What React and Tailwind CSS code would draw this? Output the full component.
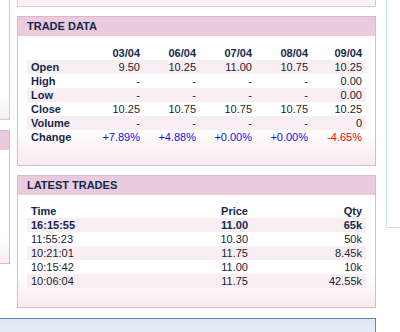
import React from "react";

// Trade data widget: OHLC summary by day plus the latest trades list.
const days = ["03/04", "06/04", "07/04", "08/04", "09/04"];

const rows = [
  { label: "Open", values: ["9.50", "10.25", "11.00", "10.75", "10.25"] },
  { label: "High", values: ["-", "-", "-", "-", "0.00"] },
  { label: "Low", values: ["-", "-", "-", "-", "0.00"] },
  { label: "Close", values: ["10.25", "10.75", "10.75", "10.75", "10.25"] },
  { label: "Volume", values: ["-", "-", "-", "-", "0"] },
  { label: "Change", values: ["+7.89%", "+4.88%", "+0.00%", "+0.00%", "-4.65%"], change: true },
];

const trades = [
  ["16:15:55", "11.00", "65k"],
  ["11:55:23", "10.30", "50k"],
  ["10:21:01", "11.75", "8.45k"],
  ["10:15:42", "11.00", "10k"],
  ["10:06:04", "11.75", "42.55k"],
];

const Panel = ({ title, children, className = "" }) => (
  <div className={`border border-[#dcb6cc] bg-gradient-to-b from-white from-75% to-[#f8ebf2] ${className}`}>
    <div className="h-[19px] bg-[#e9cbdd] pl-[9px] text-[11px] font-bold leading-[19px] text-[#13294b]">
      {title}
    </div>
    {children}
  </div>
);

export default function App() {
  return (
    <div
      className="h-[332px] w-[400px] overflow-hidden bg-white text-[11px] text-[#1c1c2c]"
      style={{ fontFamily: '"Liberation Sans", Arial, sans-serif' }}
    >
      <div className="flex items-start">
        {/* left column (cut off) */}
        <div className="flex w-[10px] flex-col gap-[10px]">
          <div className="h-[120px] border-r border-b border-[#e2c4d6] bg-gradient-to-b from-white from-80% to-[#f8ecf2]" />
          <div className="h-[134px] border-t border-r border-b border-[#dcb6cc] bg-gradient-to-b from-white from-80% to-[#f8ecf2]">
            <div className="h-[19px] bg-[#e9cbdd]" />
          </div>
        </div>

        {/* center column */}
        <div className="ml-[7px] flex w-[359px] flex-col">
          <div className="h-[7px] border-x border-b border-[#e2c4d6] bg-[#faf1f6]" />

          <Panel title="TRADE DATA" className="mt-[9px] h-[150px]">
            <div className="px-[9px] pt-[9px]">
              <div className="grid h-[15px] grid-cols-[61px_56px_56px_56px_56px_1fr] items-center font-bold text-[#13294b]">
                <div />
                {days.map((d) => (
                  <div key={d} className="pr-[4px] text-right">{d}</div>
                ))}
              </div>
              {rows.map((r, i) => (
                <div
                  key={r.label}
                  className={`grid h-[14px] grid-cols-[61px_56px_56px_56px_56px_1fr] items-center leading-[14px] ${
                    i % 2 === 0 ? "bg-[#f9eef3]" : ""
                  }`}
                >
                  <div className="pl-[4px] font-bold text-[#13294b]">{r.label}</div>
                  {r.values.map((v, j) => (
                    <div
                      key={j}
                      className={`pr-[4px] text-right ${
                        r.change ? (v.startsWith("-") ? "text-[#ff0000]" : "text-[#1010ee]") : ""
                      }`}
                    >
                      {v}
                    </div>
                  ))}
                </div>
              ))}
            </div>
          </Panel>

          <Panel title="LATEST TRADES" className="mt-[9px] h-[133px]">
            <div className="px-[9px] pt-[8px]">
              <div className="grid h-[15px] grid-cols-[165px_60px_1fr] items-center font-bold text-[#13294b]">
                <div className="pl-[4px]">Time</div>
                <div className="pr-[4px] text-right">Price</div>
                <div className="pr-[4px] text-right">Qty</div>
              </div>
              {trades.map((t, i) => (
                <div
                  key={t[0]}
                  className={`grid h-[14px] grid-cols-[165px_60px_1fr] items-center leading-[14px] ${
                    i % 2 === 0 ? "bg-[#f9eef3]" : ""
                  } ${i === 0 ? "font-bold text-[#13294b]" : ""}`}
                >
                  <div className="pl-[4px]">{t[0]}</div>
                  <div className="pr-[4px] text-right">{t[1]}</div>
                  <div className="pr-[4px] text-right">{t[2]}</div>
                </div>
              ))}
            </div>
          </Panel>
        </div>

        {/* right column (cut off) */}
        <div className="ml-[10px] h-[228px] flex-1 border-l border-b border-[#cfdff0] bg-white" />
      </div>

      {/* bottom blue panel */}
      <div className="mt-[10px] h-[40px] w-[376px] border-t border-r border-[#5a87bd] bg-gradient-to-b from-[#dde8f4] to-[#eef3f9]" />
    </div>
  );
}
